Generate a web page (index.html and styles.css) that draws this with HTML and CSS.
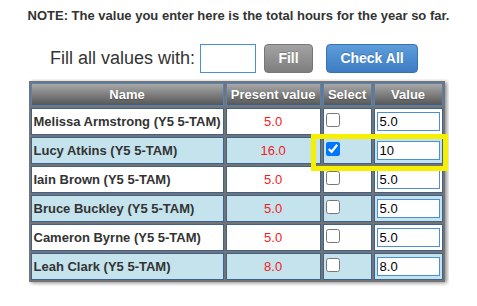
FILE: index.html
```html
<!DOCTYPE html>
<html lang="en">
<head>
  <meta charset="UTF-8" />
  <title>Enter Hours</title>
  <link rel="stylesheet" href="styles.css">
</head>
<body>

  <p class="note">NOTE: The value you enter here is the total hours for the year so far.</p>

  <div class="fill-row">
    <label for="fillValue">Fill all values with:</label>
    <input type="text" id="fillValue" class="fill-input" />
    <button class="btn btn-grey">Fill</button>
    <button class="btn btn-blue">Check All</button>
  </div>

  <div class="table-wrap">
    <table class="hours">
      <thead>
        <tr>
          <th class="col-name">Name</th>
          <th class="col-present">Present value</th>
          <th class="col-select">Select</th>
          <th class="col-value">Value</th>
        </tr>
      </thead>
      <tbody>
        <tr>
          <td class="name">Melissa Armstrong (Y5 5-TAM)</td>
          <td class="present">5.0</td>
          <td class="select"><input type="checkbox" /></td>
          <td class="value"><input type="text" value="5.0" /></td>
        </tr>
        <tr class="alt">
          <td class="name">Lucy Atkins (Y5 5-TAM)</td>
          <td class="present">16.0</td>
          <td class="select"><input type="checkbox" checked /></td>
          <td class="value"><input type="text" value="10" /></td>
        </tr>
        <tr>
          <td class="name">Iain Brown (Y5 5-TAM)</td>
          <td class="present">5.0</td>
          <td class="select"><input type="checkbox" /></td>
          <td class="value"><input type="text" value="5.0" /></td>
        </tr>
        <tr class="alt">
          <td class="name">Bruce Buckley (Y5 5-TAM)</td>
          <td class="present">5.0</td>
          <td class="select"><input type="checkbox" /></td>
          <td class="value"><input type="text" value="5.0" /></td>
        </tr>
        <tr>
          <td class="name">Cameron Byrne (Y5 5-TAM)</td>
          <td class="present">5.0</td>
          <td class="select"><input type="checkbox" /></td>
          <td class="value"><input type="text" value="5.0" /></td>
        </tr>
        <tr class="alt">
          <td class="name">Leah Clark (Y5 5-TAM)</td>
          <td class="present">8.0</td>
          <td class="select"><input type="checkbox" /></td>
          <td class="value"><input type="text" value="8.0" /></td>
        </tr>
      </tbody>
    </table>

    <div class="highlight"></div>
  </div>

</body>
</html>
```

FILE: styles.css
```css
body {
  font-family: "Liberation Sans", Arial, sans-serif;
  margin: 0;
  padding: 0;
  background: white;
  color: #333;
  display: flex;
  flex-direction: column;
  align-items: center;
}

.note {
  margin: 8px 0 0;
  font-size: 13px;
  line-height: 16px;
  font-weight: bold;
  color: #333;
}

.fill-row {
  display: flex;
  align-items: center;
  margin-top: 19px;
  padding-right: 9px;
  height: 30px;
}

.fill-row label {
  font-size: 18px;
  color: #333;
  margin-right: 5px;
}

.fill-input {
  width: 56px;
  height: 29px;
  box-sizing: border-box;
  border: 1px solid #4a90d9;
  padding: 2px 4px;
  margin: 1px 8px 0 0;
}

.btn {
  height: 29px;
  border-radius: 4px;
  font-family: "Liberation Sans", Arial, sans-serif;
  font-size: 14px;
  font-weight: bold;
  color: white;
  cursor: pointer;
  padding: 0;
}

.btn-grey {
  width: 49px;
  margin-right: 13px;
  background: linear-gradient(#a3a3a3, #7e7e7e);
  border: 1px solid #777;
  text-shadow: 0 -1px 0 rgba(0, 0, 0, 0.2);
}

.btn-blue {
  width: 92px;
  background: linear-gradient(#5d9ddb, #3d7cc2);
  border: 1px solid #3a72b0;
  text-shadow: 0 -1px 0 rgba(0, 0, 0, 0.2);
}

.table-wrap {
  position: relative;
  width: 420px;
  height: 207px;
  margin-top: 6px;
  padding-top: 2px;
  box-sizing: border-box;
  overflow: hidden;
}

.hours {
  border-collapse: separate;
  border-spacing: 2px;
  background: #747474;
  box-shadow: 2px 1px 4px rgba(0, 0, 0, 0.45);
  font-size: 13px;
}

.hours th {
  height: 23px;
  padding: 0 2px;
  box-sizing: border-box;
  border: 1px solid #4d84c4;
  background: linear-gradient(#a9a9a9, #7a7a7a 55%, #575757);
  color: white;
  font-weight: bold;
  text-shadow: 0 1px 1px rgba(0, 0, 0, 0.3);
  white-space: nowrap;
}

.col-name { width: 192px; }
.col-present { width: 95px; }
.col-select { width: 49px; }
.col-value { width: 68px; }

.hours td {
  height: 27px;
  box-sizing: border-box;
  padding: 2px;
  border: 1px solid #3e628e;
  background: white;
  white-space: nowrap;
}

.hours tr.alt td {
  background: #c4e3ec;
}

.hours td.name {
  font-weight: bold;
  color: #333;
}

.hours td.present {
  text-align: center;
  color: #f41b1b;
}

.hours td.select {
  vertical-align: top;
}

.hours td.select input {
  display: block;
  margin: 2px 0 0;
  width: 14px;
  height: 14px;
}

.hours td.value input {
  display: block;
  width: 63px;
  height: 19px;
  box-sizing: border-box;
  margin: 0;
  border: 1px solid #4a90d9;
  padding: 1px 2px;
  font-family: "Liberation Sans", Arial, sans-serif;
  font-size: 13px;
  color: #000;
}

.highlight {
  position: absolute;
  left: 282px;
  top: 55px;
  width: 137px;
  height: 37px;
  box-sizing: border-box;
  border: 5px solid #f7ef00;
}
```
